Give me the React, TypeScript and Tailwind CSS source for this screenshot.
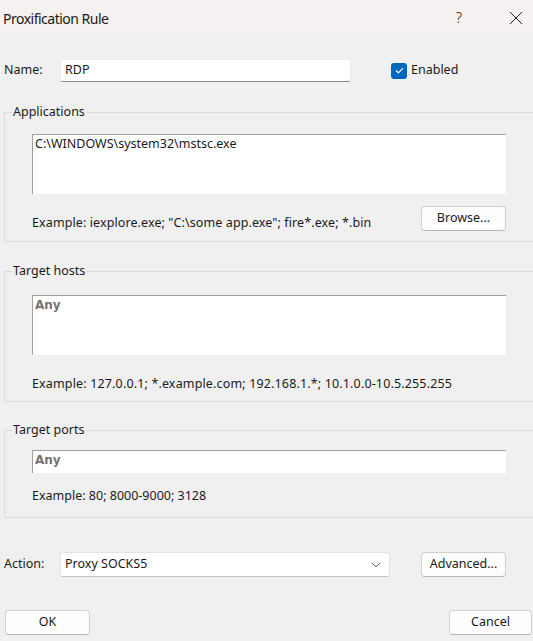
import React from 'react';

function WinButton({ label, className = '' }: { label: string; className?: string }) {
  return (
    <button
      className={`h-[25px] rounded-[4px] border border-[#d0d0d0] border-b-[#b8b8b8] bg-[#fdfdfd] text-[12.5px] text-[#1a1a1a] ${className}`}
    >
      {label}
    </button>
  );
}

function Group({ title, children, className = '' }: { title: string; children: React.ReactNode; className?: string }) {
  return (
    <fieldset className={`ml-[4px] w-[540px] border border-[#dcdcdc] ${className}`}>
      <legend className="ml-[7px] px-[1px] leading-[16px] text-[12.5px] text-[#1a1a1a]">{title}</legend>
      <div className="pl-[27px]">{children}</div>
    </fieldset>
  );
}

const fieldBox = 'w-[474px] border-l border-t border-[#a0a0a0] bg-white pl-[2px] pt-[1px]';
const anyText = "font-['DejaVu_Sans',sans-serif] text-[12px] font-bold leading-[16px] text-[#737373]";

export default function App() {
  return (
    <div className="w-[533px] h-[641px] overflow-hidden bg-[#f0f0f0] font-['Noto_Sans',sans-serif] text-[12.5px] text-[#1a1a1a]">
      {/* title bar */}
      <div className="flex h-[35px] items-center bg-[#f5f1f0]">
        <span className="ml-[3px] mt-[1px] text-[14px] tracking-[-0.5px]">Proxification Rule</span>
        <span className="ml-auto mr-[47px] text-[15px] font-light">?</span>
        <svg width="14" height="14" viewBox="0 0 14 14" className="mr-[10px]">
          <path d="M1 1 L13 13 M13 1 L1 13" stroke="#1a1a1a" strokeWidth="1" fill="none" />
        </svg>
      </div>

      {/* name row */}
      <div className="mt-[24px] flex h-[23px] items-center">
        <span className="w-[60px] pl-[4px]">Name:</span>
        <div className="flex h-[23px] w-[291px] items-center rounded-[3px] border border-[#ececec] border-b-[#8a8a8a] bg-white pl-[4px]">
          RDP
        </div>
        <div className="ml-[40px] flex items-center gap-[4px]">
          <span className="flex h-[16px] w-[16px] items-center justify-center rounded-[3px] bg-[#0067c0]">
            <svg width="9" height="7" viewBox="0 0 9 7">
              <path d="M1 3.5 L3.4 5.8 L8 1.2" stroke="white" strokeWidth="1.2" fill="none" />
            </svg>
          </span>
          <span>Enabled</span>
        </div>
      </div>

      {/* applications */}
      <Group title="Applications" className="mt-[22px] pb-[10px]">
        <div className={`mt-[14px] h-[60px] ${fieldBox} leading-[16px]`}>C:\WINDOWS\system32\mstsc.exe</div>
        <div className="mt-[12px] flex w-[474px] items-end justify-between">
          <span className="leading-[16px] tracking-[0.1px]">Example: iexplore.exe; "C:\some app.exe"; fire*.exe; *.bin</span>
          <WinButton label="Browse..." className="w-[85px]" />
        </div>
      </Group>

      {/* target hosts */}
      <Group title="Target hosts" className="mt-[21px] pb-[9px]">
        <div className={`mt-[16px] h-[60px] ${fieldBox} ${anyText}`}>Any</div>
        <div className="mt-[21px] leading-[16px] tracking-[0.15px]">
          Example: 127.0.0.1; *.example.com; 192.168.1.*; 10.1.0.0-10.5.255.255
        </div>
      </Group>

      {/* target ports */}
      <Group title="Target ports" className="mt-[20px] pb-[13px]">
        <div className={`mt-[12px] h-[23px] ${fieldBox} ${anyText}`}>Any</div>
        <div className="mt-[15px] leading-[16px]">Example: 80; 8000-9000; 3128</div>
      </Group>

      {/* action row */}
      <div className="mt-[34px] flex h-[25px] items-center">
        <span className="w-[60px] pl-[4px]">Action:</span>
        <div className="flex h-[25px] w-[330px] items-center rounded-[3px] border border-[#e3e3e3] border-b-[#c4c4c4] bg-white pl-[4px] pr-[4px]">
          <span>Proxy SOCKS5</span>
          <svg width="10" height="6" viewBox="0 0 10 6" className="ml-auto mr-[4px]">
            <path d="M1 1 L5 5 L9 1" stroke="#5a5a5a" strokeWidth="1" fill="none" />
          </svg>
        </div>
        <WinButton label="Advanced..." className="ml-[31px] w-[85px]" />
      </div>

      {/* bottom buttons */}
      <div className="mt-[33px] flex items-center justify-between pl-[5px] pr-[1px]">
        <WinButton label="OK" className="w-[85px]" />
        <WinButton label="Cancel" className="w-[83px]" />
      </div>
    </div>
  );
}
